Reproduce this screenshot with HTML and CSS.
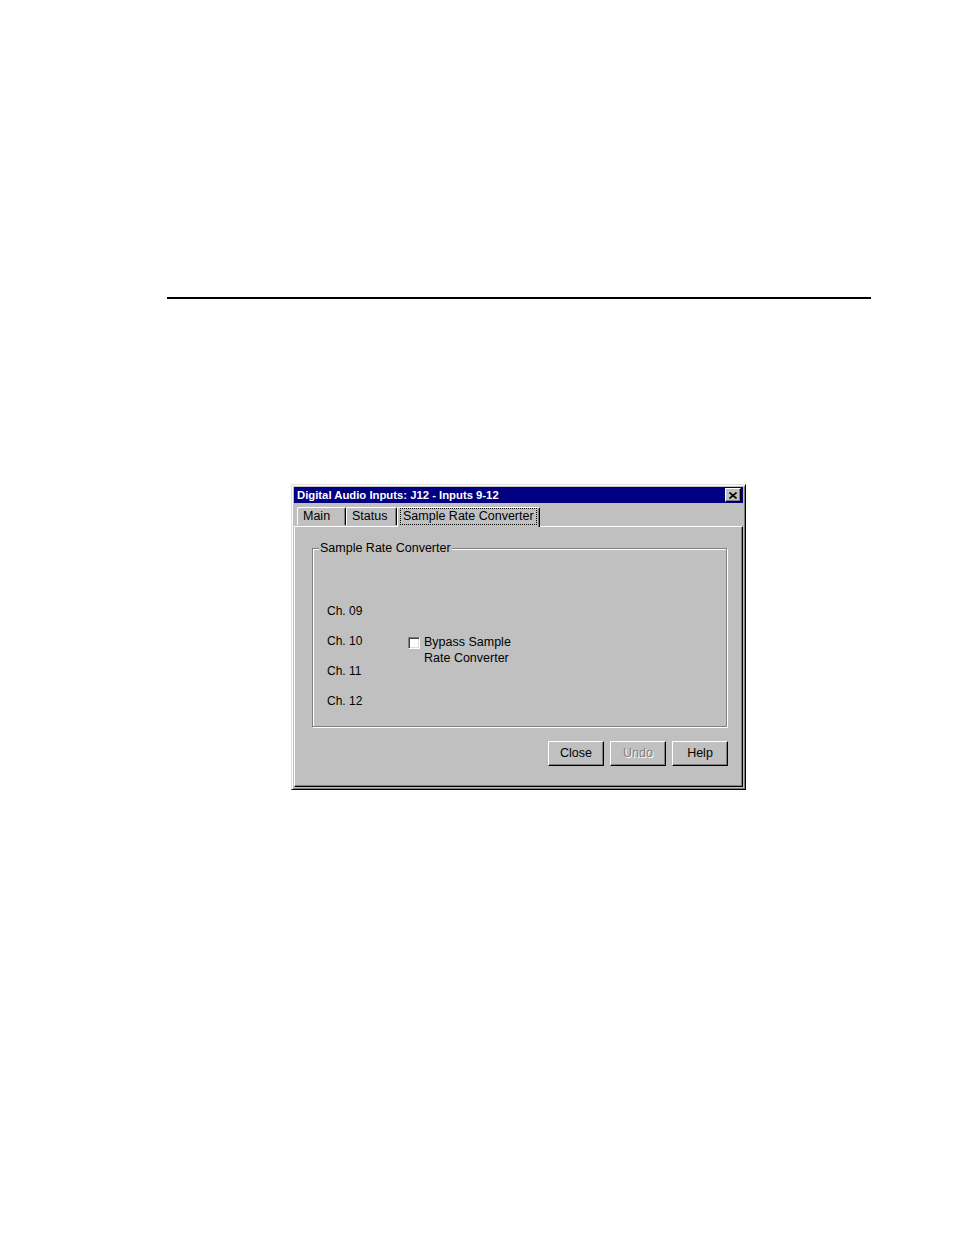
FILE: index.html
```html
<!DOCTYPE html>
<html>
<head>
<meta charset="utf-8">
<link rel="stylesheet" href="styles.css">
</head>
<body>
<div class="page">
  <div class="rule"></div>
  <div class="dialog">
    <div class="titlebar">
      <span class="title">Digital Audio Inputs: J12 - Inputs 9-12</span>
      <span class="closebtn"><svg width="8" height="7" viewBox="0 0 8 7"><path d="M0.5 0.5L7.5 6.5M7.5 0.5L0.5 6.5" stroke="#000" stroke-width="1.6" fill="none"/></svg></span>
    </div>
    <div class="tabs">
      <div class="tab tab-main">Main</div>
      <div class="tab tab-status">Status</div>
      <div class="tab tab-active"><span class="focus">Sample Rate Converter</span></div>
    </div>
    <div class="panel">
      <div class="group">
        <span class="legend">Sample Rate Converter</span>
        <div class="group-body">
          <div class="labels">
            <div class="ch">Ch. 09</div>
            <div class="ch">Ch. 10</div>
            <div class="ch">Ch. 11</div>
            <div class="ch">Ch. 12</div>
          </div>
          <div class="check">
            <span class="box"></span>
            <span class="check-text">Bypass Sample<br>Rate Converter</span>
          </div>
        </div>
      </div>
      <div class="buttons">
        <div class="btn">Close</div>
        <div class="btn disabled">Undo</div>
        <div class="btn">Help</div>
      </div>
    </div>
  </div>
</div>
</body>
</html>
```
FILE: styles.css
```css
html, body {
  margin: 0;
  padding: 0;
  background: #fff;
}
.page {
  padding-top: 297px;
  height: 938px;
  font-family: "Liberation Sans", Arial, sans-serif;
  font-size: 12.5px;
  color: #000;
}
.rule {
  margin-left: 167px;
  width: 704px;
  height: 2px;
  background: #000;
}
.dialog {
  margin: 185px 0 0 291px;
  width: 451px;
  height: 302px;
  background: #c0c0c0;
  border: 1px solid;
  border-color: #dfdfdf #000 #000 #dfdfdf;
  box-shadow: inset 1px 1px 0 #fff, inset -1px -1px 0 #808080;
  padding: 1px;
  box-sizing: content-box;
  display: flex;
  flex-direction: column;
}
.titlebar {
  margin: 1px 1px 0 1px;
  height: 16px;
  background: #000080;
  display: flex;
  align-items: center;
  justify-content: space-between;
  padding: 0 2px 0 3px;
}
.title {
  color: #fff;
  font-weight: bold;
  font-size: 11.3px;
  white-space: nowrap;
}
.closebtn {
  width: 14px;
  height: 12px;
  background: #c0c0c0;
  border: 1px solid;
  border-color: #fff #000 #000 #fff;
  box-shadow: inset -1px -1px 0 #808080;
  display: flex;
  align-items: center;
  justify-content: center;
}
.tabs {
  display: flex;
  align-items: flex-end;
  margin: 3px 0 0 4px;
  height: 20px;
  position: relative;
  z-index: 1;
}
.tab {
  height: 17px;
  line-height: 17px;
  border-left: 1px solid #fff;
  border-top: 1px solid #fff;
  border-right: 1px solid #000;
  box-shadow: inset -1px 0 0 #808080;
  border-radius: 2px 2px 0 0;
  padding: 0 5px;
  box-sizing: content-box;
  margin-bottom: 1px;
  white-space: nowrap;
}
.tab-main {
  width: 37px;
}
.tab-status {
  width: 39px;
}
.tab-active {
  height: 20px;
  margin-bottom: -1px;
  padding: 0 2px;
  width: 143px;
  box-sizing: border-box;
  background: #c0c0c0;
  display: flex;
  align-items: center;
}
.focus {
  display: block;
  flex: 1;
  border: 1px dotted #000;
  padding: 0 2px;
  line-height: 15px;
  margin-top: -2px;
  white-space: nowrap;
}
.panel {
  margin: 0 1px 1px 1px;
  flex: 1;
  border: 1px solid;
  border-color: #fff #000 #000 #fff;
  box-shadow: inset -1px -1px 0 #808080;
  padding: 21px 15px 0 17px;
}
.group {
  position: relative;
  height: 177px;
  border: 1px solid #808080;
  box-shadow: inset 1px 1px 0 #fff, 1px 1px 0 #fff;
}
.legend {
  position: absolute;
  top: -8px;
  left: 6px;
  background: #c0c0c0;
  padding: 0 1px;
  line-height: 15px;
}
.group-body {
  display: flex;
  padding: 47px 0 0 14px;
}
.labels {
  width: 81px;
  font-size: 12px;
}
.ch {
  height: 30px;
  line-height: 30px;
}
.check {
  margin-top: 38px;
  display: flex;
  align-items: flex-start;
}
.box {
  width: 10px;
  height: 10px;
  margin-top: 3px;
  margin-right: 4px;
  background: #fff;
  border: 1px solid;
  border-color: #808080 #fff #fff #808080;
  box-shadow: inset 1px 1px 0 #404040, inset -1px -1px 0 #dfdfdf;
}
.check-text {
  line-height: 16px;
}
.buttons {
  display: flex;
  justify-content: flex-end;
  gap: 6px;
  margin-top: 14px;
  margin-right: -1px;
}
.btn {
  width: 54px;
  height: 23px;
  line-height: 23px;
  text-align: center;
  border: 1px solid;
  border-color: #fff #000 #000 #fff;
  box-shadow: inset -1px -1px 0 #808080;
}
.btn.disabled {
  color: #808080;
  text-shadow: 1px 1px 0 #fff;
}
```
